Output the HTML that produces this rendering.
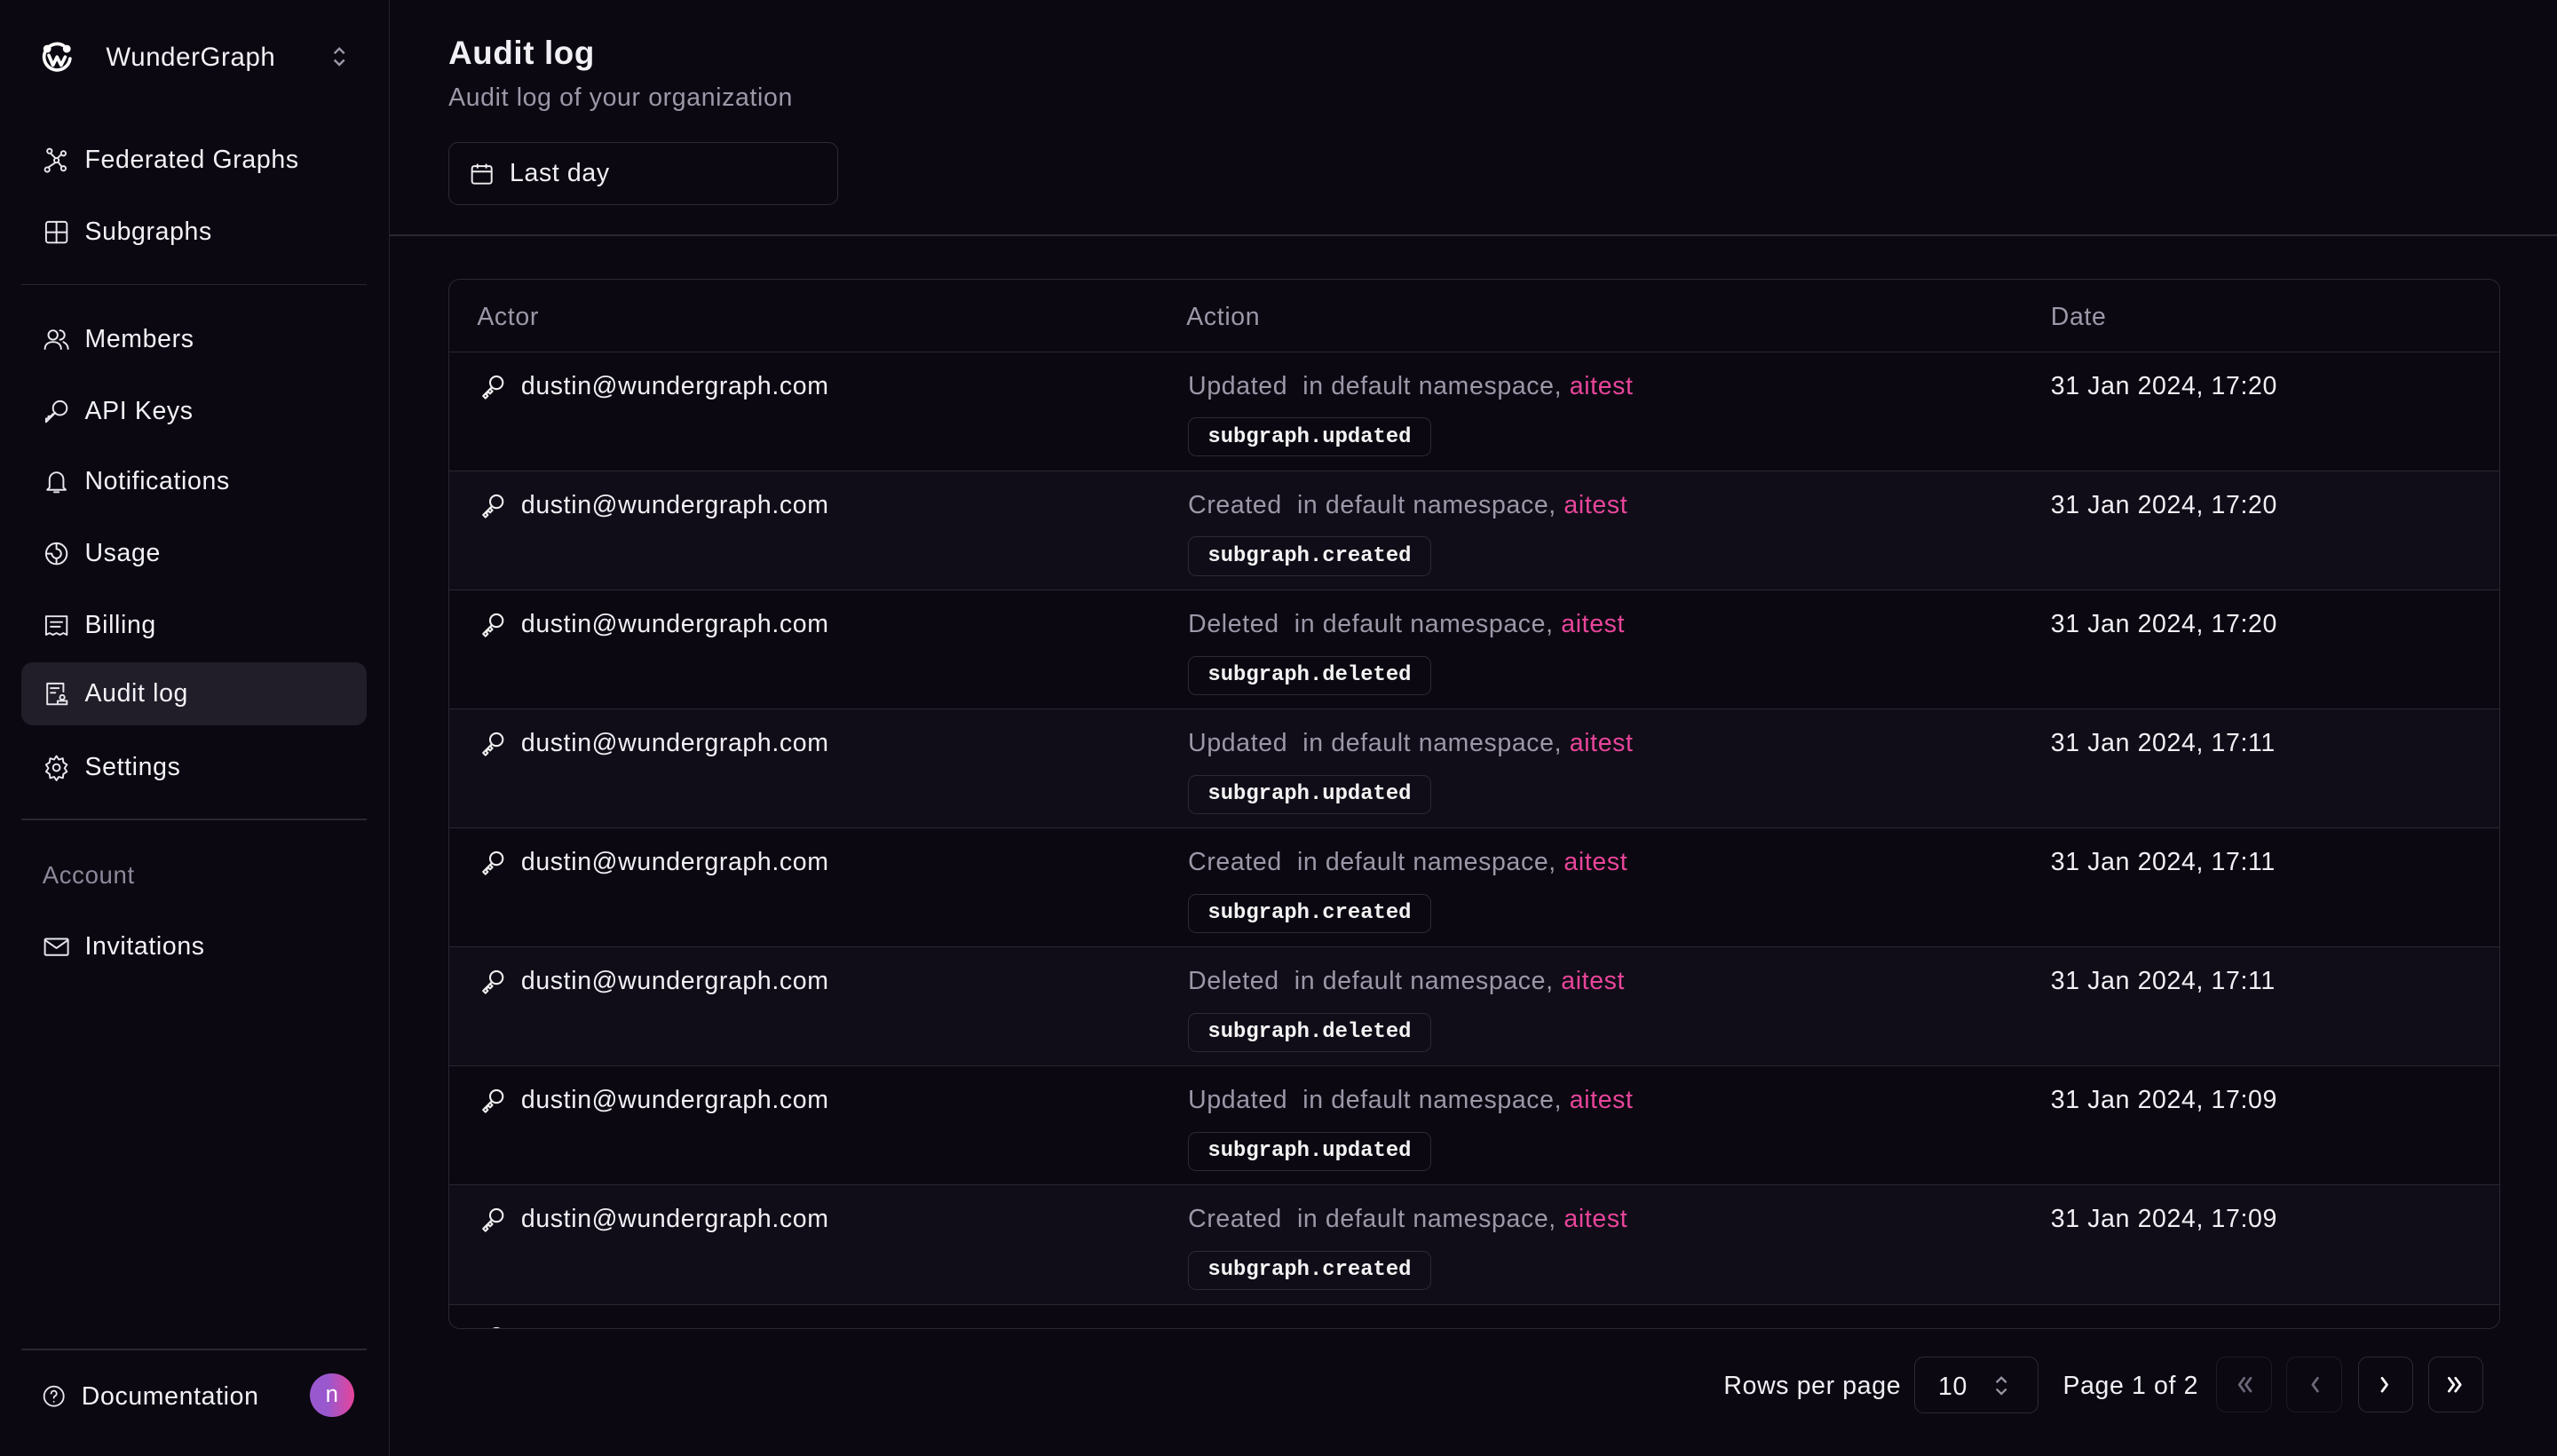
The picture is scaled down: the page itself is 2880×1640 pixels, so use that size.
<!DOCTYPE html>
<html><head><meta charset="utf-8"><style>
*{margin:0;padding:0;box-sizing:border-box}
html,body{background:#0b0812;overflow:hidden}
body{zoom:1.83673;width:1568px;height:893px;position:relative;font-family:"Liberation Sans",sans-serif;color:#f1f0f4;letter-spacing:0.35px}
.a{position:absolute}
.side{left:0;top:0;width:239px;height:893px;border-right:1px solid #24212c}
.nav{position:absolute;left:13px;width:212px;height:39px;display:flex;align-items:center;padding-left:13px;font-size:15.5px;color:#f3f2f6}
.nav svg{width:17px;height:17px;margin-right:9px;fill:none;stroke:#e8e7ec;stroke-width:1.5;stroke-linecap:round;stroke-linejoin:round}
.active{background:#211e29;border-radius:7px}
.sep{position:absolute;left:13px;width:212px;height:1px;background:#2a2733}
.tbl{left:275px;top:171px;width:1258px;height:644px;border:1px solid #2a2733;border-radius:7px;overflow:hidden}
.row{position:absolute;left:0;width:1258px;height:73px;border-top:1px solid #2a2733}
.row.alt{background:#100d18}
.act{position:absolute;left:18px;top:12px;font-size:15.5px;display:flex;align-items:center}
.act svg{width:17px;height:17px;margin-right:9px;fill:none;stroke:#eee;stroke-width:1.6;stroke-linecap:round;stroke-linejoin:round}
.acn{position:absolute;left:453px;top:12px;font-size:15.5px;color:#9c98a8}
.acn b{font-weight:normal;color:#e8459a}
.badge{position:absolute;left:453px;top:40px;height:24px;width:149px;border:1px solid #2d2a36;border-radius:5px;font-family:"Liberation Mono",monospace;font-weight:bold;font-size:13px;letter-spacing:0;color:#f3f3f3;display:flex;align-items:center;justify-content:center}
.date{position:absolute;left:982px;top:12px;font-size:15.5px;color:#f1f0f4}
.pbtn{position:absolute;top:832px;width:34px;height:34px;border:1px solid #2d2a36;border-radius:6px;display:flex;align-items:center;justify-content:center}
.pbtn svg{width:16px;height:16px;fill:none;stroke-width:1.5;stroke-linecap:round;stroke-linejoin:round}
</style></head><body>
<div class="a side">
 <svg class="a" style="left:24px;top:24px" width="22" height="22" viewBox="0 0 22 22" fill="none" stroke="#fff" stroke-width="2" stroke-linecap="round" stroke-linejoin="round"><path d="M15 4A8 8 0 1 0 19 12"/><path d="M6 10l2.5 6 2.5-5 2.5 5 2.5-5"/><circle cx="5" cy="6" r="1.4" fill="#fff"/><circle cx="17" cy="6" r="1.4" fill="#fff"/></svg>
 <div class="a" style="left:65px;top:26px;font-size:16px;color:#f3f2f6">WunderGraph</div>
 <svg class="a" style="left:203px;top:28px" width="10" height="14" viewBox="0 0 10 14" fill="none" stroke="#9c98a8" stroke-width="1.3"><path d="M2 5l3-3 3 3M2 9l3 3 3-3"/></svg>
 <div class="nav" style="top:79px"><svg viewBox="0 0 24 24"><circle cx="6" cy="4" r="2"/><circle cx="18" cy="6" r="2"/><circle cx="12" cy="12" r="2"/><circle cx="4" cy="20" r="2"/><circle cx="18" cy="19" r="2"/><path d="M7 6l4 4M16 7l-3 3M11 14l-6 4M13.5 13.5l3 4"/></svg>Federated Graphs</div>
 <div class="nav" style="top:123px"><svg viewBox="0 0 24 24"><rect x="3" y="3" width="18" height="18" rx="2"/><path d="M12 3v18M3 12h18"/></svg>Subgraphs</div>
 <div class="sep" style="top:174px"></div>
 <div class="nav" style="top:189px"><svg viewBox="0 0 24 24"><circle cx="9" cy="8" r="4"/><path d="M2 20c0-4 3-6 7-6s7 2 7 6M15 4a4 4 0 0 1 0 8M18 14c2 1 4 3 4 6"/></svg>Members</div>
 <div class="nav" style="top:233px"><svg viewBox="0 0 24 24"><circle cx="15" cy="9" r="6"/><path d="M11 13l-8 8v-3h2v-2h2l2-2"/></svg>API Keys</div>
 <div class="nav" style="top:276px"><svg viewBox="0 0 24 24"><path d="M6 17V10a6 6 0 0 1 12 0v7l2 2H4zM10 21h4"/></svg>Notifications</div>
 <div class="nav" style="top:320px"><svg viewBox="0 0 24 24"><circle cx="12" cy="12" r="9"/><path d="M12 3v5a4 4 0 1 1-4 4H3M12 16v5"/></svg>Usage</div>
 <div class="nav" style="top:364px"><svg viewBox="0 0 24 24"><path d="M3 4h18v16l-3-1.5-3 1.5-3-1.5-3 1.5-3-1.5-3 1.5zM7 9h10M7 13h8"/></svg>Billing</div>
 <div class="nav active" style="top:406px"><svg viewBox="0 0 24 24"><path d="M18 10V3H4v18h8M7 7h7M7 11h4"/><circle cx="17" cy="15" r="2"/><path d="M13 21h8v-3h-8z"/></svg>Audit log</div>
 <div class="nav" style="top:451px"><svg viewBox="0 0 24 24"><circle cx="12" cy="12" r="3"/><path d="M12 2l2 3 3.5-1 .5 3.5 3 2-2 3 2 3-3 2-.5 3.5-3.5-1-2 3-2-3-3.5 1L6 17.5l-3-2 2-3-2-3 3-2L6.5 4 10 5z"/></svg>Settings</div>
 <div class="sep" style="top:502px"></div>
 <div class="a" style="left:26px;top:528px;font-size:15px;color:#8d899a">Account</div>
 <div class="nav" style="top:561px"><svg viewBox="0 0 24 24"><rect x="2" y="5" width="20" height="14" rx="1"/><path d="M2 6l10 7 10-7"/></svg>Invitations</div>
 <div class="sep" style="top:827px"></div>
 <div class="nav" style="top:837px;padding-left:12px"><svg viewBox="0 0 24 24" style="width:16px;height:16px"><circle cx="12" cy="12" r="9"/><path d="M9.5 9.5a2.5 2.5 0 1 1 3.5 2.3c-.7.3-1 .9-1 1.7M12 17h.01"/></svg>Documentation</div>
 <div class="a" style="left:190px;top:842px;width:27px;height:27px;border-radius:50%;background:linear-gradient(90deg,#9a58cf 40%,#e6449a);font-size:14px;display:flex;align-items:center;justify-content:center;color:#fff;letter-spacing:0">n</div>
</div>

<div class="a" style="left:275px;top:21px;font-size:20px;font-weight:bold">Audit log</div>
<div class="a" style="left:275px;top:51px;font-size:15.5px;color:#9c98a8">Audit log of your organization</div>
<div class="a" style="left:275px;top:87px;width:239px;height:39px;border:1px solid #2d2a36;border-radius:6px;display:flex;align-items:center;padding-left:12px;font-size:15.5px">
 <svg width="16" height="16" viewBox="0 0 24 24" fill="none" stroke="#eee" stroke-width="1.6" style="margin-right:9px"><rect x="3" y="5" width="18" height="16" rx="2"/><path d="M3 10h18M8 3v4M16 3v4"/></svg>Last day</div>
<div class="a" style="left:239px;top:144px;width:1329px;height:1px;background:#2a2733"></div>

<div class="a tbl">
 <div class="a" style="left:17px;top:14px;font-size:15.5px;color:#9c98a8">Actor</div>
 <div class="a" style="left:452px;top:14px;font-size:15.5px;color:#9c98a8">Action</div>
 <div class="a" style="left:982px;top:14px;font-size:15.5px;color:#9c98a8">Date</div>
 <div class="row" style="top:44px"><div class="act"><svg viewBox="0 0 24 24"><circle cx="15.5" cy="8.5" r="5.5"/><path d="M11.5 12.5L4 20l2 2 2-2-1.5-1.5 2-2 1.5 1.5 2-2-1.5-1.5"/></svg>dustin@wundergraph.com</div><div class="acn">Updated &nbsp;in default namespace, <b>aitest</b></div><div class="badge">subgraph.updated</div><div class="date">31 Jan 2024, 17:20</div></div>
 <div class="row alt" style="top:117px"><div class="act"><svg viewBox="0 0 24 24"><circle cx="15.5" cy="8.5" r="5.5"/><path d="M11.5 12.5L4 20l2 2 2-2-1.5-1.5 2-2 1.5 1.5 2-2-1.5-1.5"/></svg>dustin@wundergraph.com</div><div class="acn">Created &nbsp;in default namespace, <b>aitest</b></div><div class="badge">subgraph.created</div><div class="date">31 Jan 2024, 17:20</div></div>
 <div class="row" style="top:190px"><div class="act"><svg viewBox="0 0 24 24"><circle cx="15.5" cy="8.5" r="5.5"/><path d="M11.5 12.5L4 20l2 2 2-2-1.5-1.5 2-2 1.5 1.5 2-2-1.5-1.5"/></svg>dustin@wundergraph.com</div><div class="acn">Deleted &nbsp;in default namespace, <b>aitest</b></div><div class="badge">subgraph.deleted</div><div class="date">31 Jan 2024, 17:20</div></div>
 <div class="row alt" style="top:263px"><div class="act"><svg viewBox="0 0 24 24"><circle cx="15.5" cy="8.5" r="5.5"/><path d="M11.5 12.5L4 20l2 2 2-2-1.5-1.5 2-2 1.5 1.5 2-2-1.5-1.5"/></svg>dustin@wundergraph.com</div><div class="acn">Updated &nbsp;in default namespace, <b>aitest</b></div><div class="badge">subgraph.updated</div><div class="date">31 Jan 2024, 17:11</div></div>
 <div class="row" style="top:336px"><div class="act"><svg viewBox="0 0 24 24"><circle cx="15.5" cy="8.5" r="5.5"/><path d="M11.5 12.5L4 20l2 2 2-2-1.5-1.5 2-2 1.5 1.5 2-2-1.5-1.5"/></svg>dustin@wundergraph.com</div><div class="acn">Created &nbsp;in default namespace, <b>aitest</b></div><div class="badge">subgraph.created</div><div class="date">31 Jan 2024, 17:11</div></div>
 <div class="row alt" style="top:409px"><div class="act"><svg viewBox="0 0 24 24"><circle cx="15.5" cy="8.5" r="5.5"/><path d="M11.5 12.5L4 20l2 2 2-2-1.5-1.5 2-2 1.5 1.5 2-2-1.5-1.5"/></svg>dustin@wundergraph.com</div><div class="acn">Deleted &nbsp;in default namespace, <b>aitest</b></div><div class="badge">subgraph.deleted</div><div class="date">31 Jan 2024, 17:11</div></div>
 <div class="row" style="top:482px"><div class="act"><svg viewBox="0 0 24 24"><circle cx="15.5" cy="8.5" r="5.5"/><path d="M11.5 12.5L4 20l2 2 2-2-1.5-1.5 2-2 1.5 1.5 2-2-1.5-1.5"/></svg>dustin@wundergraph.com</div><div class="acn">Updated &nbsp;in default namespace, <b>aitest</b></div><div class="badge">subgraph.updated</div><div class="date">31 Jan 2024, 17:09</div></div>
 <div class="row alt" style="top:555px"><div class="act"><svg viewBox="0 0 24 24"><circle cx="15.5" cy="8.5" r="5.5"/><path d="M11.5 12.5L4 20l2 2 2-2-1.5-1.5 2-2 1.5 1.5 2-2-1.5-1.5"/></svg>dustin@wundergraph.com</div><div class="acn">Created &nbsp;in default namespace, <b>aitest</b></div><div class="badge">subgraph.created</div><div class="date">31 Jan 2024, 17:09</div></div>
 <div class="row" style="top:628px"><div class="act"><svg viewBox="0 0 24 24"><circle cx="15.5" cy="8.5" r="5.5"/><path d="M11.5 12.5L4 20l2 2 2-2-1.5-1.5 2-2 1.5 1.5 2-2-1.5-1.5"/></svg>dustin@wundergraph.com</div></div>
</div>

<div class="a" style="left:1057px;top:841px;font-size:15.5px">Rows per page</div>
<div class="a" style="left:1174px;top:832px;width:76px;height:35px;border:1px solid #2d2a36;border-radius:6px;font-size:15.5px;padding:9px 0 0 14px">10
 <svg class="a" style="left:48px;top:10px" width="10" height="14" viewBox="0 0 10 14" fill="none" stroke="#9c98a8" stroke-width="1.2"><path d="M2 5l3-3 3 3M2 9l3 3 3-3"/></svg></div>
<div class="a" style="left:1265px;top:841px;font-size:15.5px">Page 1 of 2</div>
<div class="pbtn" style="left:1359px;border-color:#1e1b26"><svg viewBox="0 0 16 16" stroke="#6b6878"><path d="M8 4L5 8l3 4M12 4L9 8l3 4"/></svg></div>
<div class="pbtn" style="left:1402px;border-color:#1e1b26"><svg viewBox="0 0 16 16" stroke="#6b6878"><path d="M10 4L7 8l3 4"/></svg></div>
<div class="pbtn" style="left:1446px"><svg viewBox="0 0 16 16" stroke="#fff"><path d="M6 4l3 4-3 4"/></svg></div>
<div class="pbtn" style="left:1489px"><svg viewBox="0 0 16 16" stroke="#fff"><path d="M4 4l3 4-3 4M8 4l3 4-3 4"/></svg></div>
</body></html>
